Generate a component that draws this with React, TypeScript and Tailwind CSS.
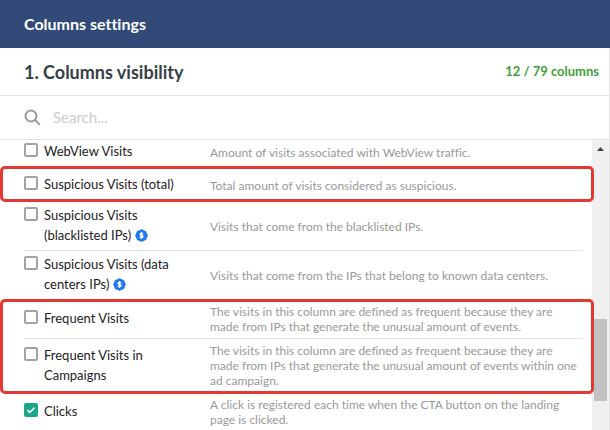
import clsx from "clsx";
import { useState } from "react";

type Column = {
  id: string;
  name: string;
  description: string;
  paid?: boolean;
  className?: string;
};

const webView: Column = {
  id: "webview",
  name: "WebView Visits",
  description: "Amount of visits associated with WebView traffic.",
  className: "py-px",
};

const suspicious: Column = {
  id: "suspicious-total",
  name: "Suspicious Visits (total)",
  description: "Total amount of visits considered as suspicious.",
  className: "pt-[5px] pb-px",
};

const sources: Column[] = [
  {
    id: "suspicious-blacklisted",
    name: "Suspicious Visits (blacklisted IPs)",
    description: "Visits that come from the blacklisted IPs.",
    paid: true,
    className: "pt-[3px] pb-px border-b",
  },
  {
    id: "suspicious-data-centers",
    name: "Suspicious Visits (data centers IPs)",
    description:
      "Visits that come from the IPs that belong to known data centers.",
    paid: true,
    className: "pt-[3px] pb-px",
  },
];

const frequent: Column[] = [
  {
    id: "frequent",
    name: "Frequent Visits",
    description:
      "The visits in this column are defined as frequent because they are made from IPs that generate the unusual amount of events.",
    className: "py-0.5 border-b",
  },
  {
    id: "frequent-campaigns",
    name: "Frequent Visits in Campaigns",
    description:
      "The visits in this column are defined as frequent because they are made from IPs that generate the unusual amount of events within one ad campaign.",
    className: "pt-1 pb-px",
  },
];

const clicks: Column = {
  id: "clicks",
  name: "Clicks",
  description:
    "A click is registered each time when the CTA button on the landing page is clicked.",
  className: "pt-[3px] pb-px",
};

const PaidBadge = () => (
  <svg
    viewBox="0 0 24 24"
    className="ml-1 inline-block size-[13px] align-[-2px]"
    aria-hidden="true"
  >
    <g fill="#1f7af0">
      <circle cx="12" cy="12" r="10.500" />
      <rect x="3" y="3" width="18" height="18" rx="3" />
      <rect
        x="3"
        y="3"
        width="18"
        height="18"
        rx="3"
        transform="rotate(45 12 12)"
      />
    </g>
    <path
      fill="none"
      stroke="#fff"
      strokeWidth="2.400"
      d="M15 9.500c-.6-1-1.700-1.400-3-1.400-1.600 0-2.700.6-2.700 1.900 0 2.800 5.600 1.200 5.600 4 0 1.300-1.200 2-2.900 2-1.400 0-2.600-.5-3.200-1.500M12 5.500v13"
    />
  </svg>
);

const ColumnRow = ({
  column,
  checked,
  onToggle,
}: {
  column: Column;
  checked: boolean;
  onToggle: (id: string) => void;
}) => (
  <div
    className={clsx(
      "ml-6 mr-2.5 flex items-center border-[#e2e2e2]",
      column.className
    )}
  >
    <label className="flex w-[186px] shrink-0 items-start gap-[6px] pr-8 pb-1 text-[13px] leading-5 text-[#222]">
      <span className="mt-0.5 grid size-[14px] shrink-0">
        <input
          type="checkbox"
          checked={checked}
          onChange={() => onToggle(column.id)}
          className="peer col-start-1 row-start-1 size-[14px] appearance-none rounded-[2px] border-2 border-[#a3a3a3] bg-white checked:border-[#1ba589] checked:bg-[#1ba589]"
        />
        <svg
          viewBox="0 0 14 14"
          className="pointer-events-none invisible col-start-1 row-start-1 size-[14px] peer-checked:visible"
          aria-hidden="true"
        >
          <path
            d="M3.500 7.200l2.300 2.200 4.700-4.700"
            fill="none"
            stroke="#fff"
            strokeWidth="1.600"
          />
        </svg>
      </span>
      <span>
        {column.name}
        {column.paid && <PaidBadge />}
      </span>
    </label>
    <p className="min-w-0 flex-1 pb-0.5 text-xs leading-[15px] text-[#999]">
      {column.description}
    </p>
  </div>
);

const App = () => {
  const [selected, setSelected] = useState<string[]>(["clicks"]);
  const [query, setQuery] = useState("");

  const toggle = (id: string) =>
    setSelected((prev) =>
      prev.includes(id) ? prev.filter((val) => val !== id) : [...prev, id]
    );

  const renderRow = (column: Column) => (
    <ColumnRow
      key={column.id}
      column={column}
      checked={selected.includes(column.id)}
      onToggle={toggle}
    />
  );

  return (
    <main className="flex h-screen flex-col overflow-hidden bg-white font-['Lato',sans-serif] [font-variant-ligatures:none]">
      <header className="flex h-12 shrink-0 items-center bg-[#314a78] px-6">
        <h1 className="text-base font-bold text-white">Columns settings</h1>
      </header>
      <section className="flex min-h-0 flex-1 flex-col border-r border-[#e2e2e2]">
        <div className="flex h-12 shrink-0 items-center justify-between border-b border-[#e2e2e2] pr-2.5 pl-6">
          <h2 className="text-lg font-bold text-[#374047]">
            1. Columns visibility
          </h2>
          <span className="text-[13px] font-bold text-[#3f9f3b]">
            12 / 79 columns
          </span>
        </div>
        <div className="flex h-11 shrink-0 items-center gap-3 border-b border-[#e2e2e2] px-6">
          <svg
            viewBox="0 0 17 17"
            className="size-[17px] shrink-0"
            fill="none"
            stroke="#999"
            strokeWidth="2"
            aria-hidden="true"
          >
            <circle cx="7" cy="7" r="5.500" />
            <path d="M10.800 10.800l4.900 4.900" />
          </svg>
          <input
            type="text"
            aria-label="Search columns"
            placeholder="Search..."
            value={query}
            onChange={(e) => setQuery(e.target.value)}
            className="min-w-0 flex-1 text-[15px] text-[#374047] outline-none placeholder:text-[#ccc]"
          />
        </div>
        <div className="flex min-h-0 flex-1">
          <div className="min-w-0 flex-1">
            {renderRow(webView)}
            <div className="relative -mr-0.5 rounded-[5px] border-3 border-[#e53830] [&>div]:ml-[21px] [&>div]:mr-[9px]">
              {renderRow(suspicious)}
            </div>
            {sources.map(renderRow)}
            <div className="relative -mr-0.5 rounded-[5px] border-3 border-[#e53830] [&>div]:ml-[21px] [&>div]:mr-[9px]">
              {frequent.map(renderRow)}
            </div>
            {renderRow(clicks)}
          </div>
          <div className="flex w-[17px] shrink-0 flex-col items-center bg-[#f0f0f0]">
            <svg
              viewBox="0 0 7 4"
              className="mt-[7px] h-1 w-[7px]"
              aria-hidden="true"
            >
              <path d="M0 4L3.500 0 7 4z" fill="#444" />
            </svg>
            <div className="mt-[168px] h-[82px] w-[13px] bg-[#c1c1c1]" />
          </div>
        </div>
      </section>
    </main>
  );
};

export default App;
